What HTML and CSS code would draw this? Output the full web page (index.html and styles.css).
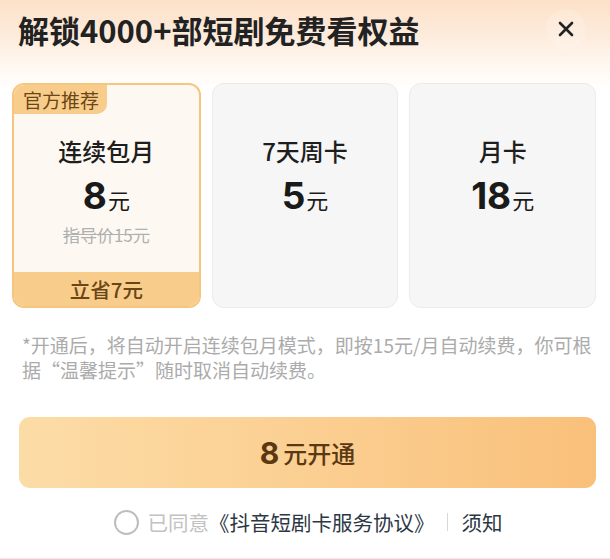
FILE: index.html
```html
<!DOCTYPE html>
<html lang="zh">
<head>
<meta charset="utf-8">
<link rel="stylesheet" href="styles.css">
</head>
<body>
<div class="sheet">
  <header class="head">
    <h1 class="title">解锁4000+部短剧免费看权益</h1>
    <div class="close">
      <svg width="18" height="18" viewBox="0 0 18 18"><path d="M3 3L15 15M15 3L3 15" stroke="#222" stroke-width="2.6" stroke-linecap="round"/></svg>
    </div>
  </header>

  <div class="plans">
    <div class="plan plan-active">
      <span class="badge">官方推荐</span>
      <div class="plan-body">
        <div class="plan-name">连续包月</div>
        <div class="plan-price"><span class="num">8</span><span class="unit">元</span></div>
        <div class="plan-orig">指导价15元</div>
      </div>
      <div class="plan-save">立省7元</div>
    </div>
    <div class="plan">
      <div class="plan-body">
        <div class="plan-name">7天周卡</div>
        <div class="plan-price"><span class="num">5</span><span class="unit">元</span></div>
      </div>
    </div>
    <div class="plan">
      <div class="plan-body">
        <div class="plan-name">月卡</div>
        <div class="plan-price"><span class="num">18</span><span class="unit">元</span></div>
      </div>
    </div>
  </div>

  <p class="note">*开通后，将自动开启连续包月模式，即按15元/月自动续费，你可根据“温馨提示”随时取消自动续费。</p>

  <button class="cta"><span class="cta-num">8</span>元开通</button>

  <div class="agree">
    <span class="radio"></span>
    <span class="agree-gray">已同意</span>
    <span class="agree-link">《抖音短剧卡服务协议》</span>
    <span class="sep"></span>
    <span class="agree-link">须知</span>
  </div>
</div>
</body>
</html>
```

FILE: styles.css
```css
* { box-sizing: border-box; }
html, body { margin: 0; padding: 0; }
body {
  width: 610px;
  height: 559px;
  overflow: hidden;
  background: #fff;
  font-family: "Noto Sans CJK SC", "Noto Sans", sans-serif;
}
.sheet {
  height: 559px;
  background: linear-gradient(to bottom, #fde1c8 0px, #fdebdb 35px, #fff7f0 65px, #ffffff 90px);
  border-bottom: 1px solid #ececec;
}
.head {
  display: flex;
  align-items: center;
  justify-content: space-between;
  padding: 8px 24px 0 18px;
  height: 58px;
}
.title {
  margin: 0;
  font-size: 31px;
  font-weight: 700;
  color: #222;
  letter-spacing: 0;
  line-height: 40px;
  margin-top: -6px;
}
.close {
  width: 40px;
  height: 40px;
  border-radius: 50%;
  background: rgba(255,255,255,0.18);
  display: flex;
  align-items: center;
  justify-content: center;
  margin-top: -8px;
}
.plans {
  display: flex;
  gap: 11px;
  padding: 25px 14px 0 12px;
}
.plan {
  position: relative;
  flex: 1;
  height: 225px;
  border-radius: 12px;
  background: #f6f6f6;
  border: 1px solid #ebebeb;
  display: flex;
  flex-direction: column;
  overflow: hidden;
}
.plan-active {
  background: #fdf9f2;
  border: 2px solid #f6c67e;
}
.badge {
  position: absolute;
  left: 0;
  top: 0;
  background: #f8cd8c;
  color: #6a4516;
  font-size: 19px;
  line-height: 29px;
  padding: 0 8px 0 9px;
  border-radius: 10px 0 10px 0;
}
.plan-body {
  flex: 1;
  display: flex;
  flex-direction: column;
  align-items: center;
  padding-top: 51px;
}
.plan-active .plan-body { padding-top: 50px; }
.plan-name {
  font-size: 24px;
  font-weight: 500;
  color: #1e1e1e;
  line-height: 32px;
}
.plan-price {
  margin-top: 8px;
  line-height: 42px;
  color: #1a1a1a;
}
.plan-price .num {
  font-family: "Inter", "Noto Sans", sans-serif;
  font-size: 37px;
  font-weight: 700;
}
.plan-price .unit {
  font-size: 22px;
  margin-left: 1px;
}
.plan-orig {
  margin-top: 0;
  font-size: 17px;
  color: #b0b0b0;
  text-decoration: line-through;
  line-height: 24px;
}
.plan-save {
  height: 34px;
  background: #f8cd8c;
  color: #6a4516;
  font-size: 20.5px;
  font-weight: 500;
  text-align: center;
  line-height: 34px;
}
.note {
  margin: 24px 14px 0 22px;
  font-size: 19px;
  line-height: 25px;
  color: #ababab;
}
.cta {
  display: flex;
  align-items: center;
  justify-content: center;
  width: 577px;
  height: 71px;
  margin: 35px 0 0 19px;
  border: 0;
  border-radius: 11px;
  background: linear-gradient(to right, #fcdca6, #fbcf92 50%, #f9c07a);
  color: #5a3812;
  font-family: "Noto Sans CJK SC", sans-serif;
  font-size: 24px;
  font-weight: 500;
  padding: 0;
}
.cta-num {
  font-family: "Inter", sans-serif;
  font-size: 30px;
  font-weight: 700;
  margin-right: 4px;
}
.agree {
  display: flex;
  align-items: center;
  justify-content: center;
  height: 30px;
  margin-top: 19px;
  font-size: 20.5px;
  padding-left: 6px;
}
.radio {
  width: 25px;
  height: 25px;
  border: 2px solid #bdbdbd;
  border-radius: 50%;
  margin-right: 9px;
}
.agree-gray { color: #c2c2c2; }
.agree-link { color: #2c3744; }
.sep {
  width: 1px;
  height: 18px;
  background: #d8d8d8;
  margin: 0 14px 0 12px;
}
```
